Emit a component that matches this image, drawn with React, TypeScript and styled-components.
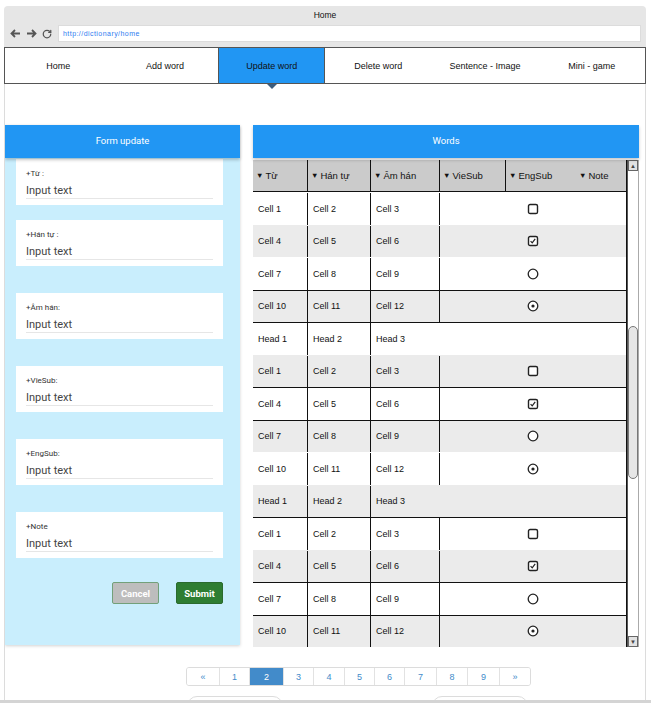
import React from 'react';
import styled, { createGlobalStyle } from 'styled-components';
import { RotateCw } from 'lucide-react';

const GlobalStyle = createGlobalStyle`
  html, body { margin: 0; padding: 0; background: #fff; }
  body { overflow: hidden; font-family: 'Liberation Sans', Arial, sans-serif; }
  * { box-sizing: border-box; }
`;

const NAV = ['Home', 'Add word', 'Update word', 'Delete word', 'Sentence - Image', 'Mini - game'];

const FIELDS = [
  { label: '+Từ :', gap: 1 },
  { label: '+Hán tự :', gap: 15 },
  { label: '+Âm hán:', gap: 27 },
  { label: '+VieSub:', gap: 27 },
  { label: '+EngSub:', gap: 27 },
  { label: '+Note', gap: 27 },
];

type Ctrl = 'box' | 'checked' | 'radio' | 'dot';
type RowData = { cells: string[]; ctrl?: Ctrl; head?: boolean };

const group: RowData[] = [
  { cells: ['Cell 1', 'Cell 2', 'Cell 3'], ctrl: 'box' },
  { cells: ['Cell 4', 'Cell 5', 'Cell 6'], ctrl: 'checked' },
  { cells: ['Cell 7', 'Cell 8', 'Cell 9'], ctrl: 'radio' },
  { cells: ['Cell 10', 'Cell 11', 'Cell 12'], ctrl: 'dot' },
];
const headRow: RowData = { cells: ['Head 1', 'Head 2', 'Head 3'], head: true };
const ROWS = [...group, headRow, ...group, headRow, ...group];
// separator lines as they appear in the mockup
const LINES = [false, false, false, true, true, false, true, true, false, false, true, false, true, true];

const PAGES = ['«', '1', '2', '3', '4', '5', '6', '7', '8', '9', '»'];

const Page = styled.div`
  width: 651px;
  height: 703px;
  display: flex;
  flex-direction: column;
  overflow: hidden;
`;

const Window = styled.div`
  margin: 6px 0 0 4px;
  width: 642px;
  flex: 1;
  min-height: 0;
  display: flex;
  flex-direction: column;
`;

const TitleBar = styled.div`
  background: #e6e6e6;
  border-radius: 4px 4px 0 0;
  height: 41px;
  display: flex;
  flex-direction: column;
`;

const Title = styled.div`
  height: 19px;
  line-height: 19px;
  text-align: center;
  font-size: 8.5px;
  color: #111;
`;

const AddressRow = styled.div`
  height: 17px;
  display: flex;
  align-items: center;
  padding-left: 6px;
  gap: 5px;
  color: #555;
`;

const AddressBox = styled.div`
  margin-left: auto;
  margin-right: 5px;
  width: 583px;
  height: 17px;
  background: #fff;
  border: 1px solid #dcdcdc;
  padding-left: 4px;
  font-size: 7px;
  letter-spacing: 0.45px;
  line-height: 15px;
  color: #2f7cf0;
`;

const NavBar = styled.div`
  height: 37px;
  border: 1px solid #555;
  display: flex;
`;

const NavItem = styled.div<{ $active?: boolean }>`
  position: relative;
  flex: 1;
  display: flex;
  align-items: center;
  justify-content: center;
  font-size: 9px;
  color: #111;
  background: ${(p) => (p.$active ? '#2196f3' : 'transparent')};
  border-left: 1px solid ${(p) => (p.$active ? '#555' : 'transparent')};
  border-right: 1px solid ${(p) => (p.$active ? '#555' : 'transparent')};
`;

const Pointer = styled.div`
  position: absolute;
  left: 50%;
  bottom: -6px;
  margin-left: -5px;
  width: 0;
  height: 0;
  border-left: 5px solid transparent;
  border-right: 5px solid transparent;
  border-top: 5px solid #3d5d7d;
`;

const Content = styled.div`
  flex: 1;
  min-height: 0;
  overflow: hidden;
  border-left: 1px solid #dcdcdc;
  border-right: 1px solid #dcdcdc;
  padding-top: 41px;
`;

const Columns = styled.div`
  display: flex;
  align-items: flex-start;
  gap: 13px;
`;

const FormPanel = styled.div`
  width: 235px;
  height: 520px;
  display: flex;
  flex-direction: column;
  background: #c9eefd;
  box-shadow: 0 1px 3px rgba(0, 0, 0, 0.18);
`;

const PanelHeader = styled.div`
  position: relative;
  z-index: 1;
  height: 33px;
  flex-shrink: 0;
  background: #2196f3;
  color: #fff;
  display: flex;
  align-items: center;
  justify-content: center;
  padding-bottom: 2px;
  font-family: Roboto, 'Liberation Sans', sans-serif;
  font-size: 9.5px;
  box-shadow: 0 2px 3px rgba(0, 0, 0, 0.22);
`;

const FormBody = styled.div`
  padding: 0 17px 0 11px;
  display: flex;
  flex-direction: column;
`;

const FieldCard = styled.div<{ $gap: number }>`
  margin-top: ${(p) => p.$gap}px;
  height: 46px;
  background: #fff;
  padding: 10px 10px 0;
  font-family: Roboto, 'Liberation Sans', sans-serif;
`;

const FieldLabel = styled.div`
  font-size: 8px;
  line-height: 10px;
  color: #333;
`;

const FieldInput = styled.div`
  margin-top: 5px;
  font-size: 11px;
  line-height: 14px;
  color: #444;
  border-bottom: 1px solid #e6e6e6;
`;

const Actions = styled.div`
  margin-top: 24px;
  display: flex;
  justify-content: flex-end;
  gap: 17px;
`;

const Button = styled.div<{ $primary?: boolean }>`
  width: 47px;
  height: 22px;
  border-radius: 2px;
  display: flex;
  align-items: center;
  justify-content: center;
  font-family: Roboto, 'Liberation Sans', sans-serif;
  font-size: 9.5px;
  font-weight: bold;
  color: #fff;
  background: ${(p) => (p.$primary ? '#2e7d32' : '#bdbdbd')};
  border: 1px solid ${(p) => (p.$primary ? '#2a6a2e' : '#72a07a')};
`;

const WordsPanel = styled.div`
  width: 386px;
  display: flex;
  flex-direction: column;
`;

const TableWrap = styled.div`
  margin-top: 2px;
  height: 487px;
  display: flex;
`;

const Table = styled.div`
  width: 374px;
  border-right: 1px solid #111;
  font-size: 9px;
  color: #111;
`;

const HeaderRow = styled.div`
  height: 32px;
  display: grid;
  grid-template-columns: 55px 63px 69px 66px 70px 1fr;
  background: #cbcbcb;
  border-bottom: 1px solid #111;
`;

const HeaderCell = styled.div<{ $line?: boolean }>`
  display: flex;
  align-items: center;
  padding-left: 3px;
  font-size: 9.5px;
  border-right: 1px solid ${(p) => (p.$line ? '#111' : 'transparent')};
`;

const SortMark = styled.span`
  font-size: 7.5px;
  margin-right: 2px;
`;

const Row = styled.div<{ $alt: boolean; $line: boolean }>`
  height: 32.5px;
  display: grid;
  grid-template-columns: 55px 63px 69px 1fr;
  background: ${(p) => (p.$alt ? '#ebebeb' : '#fff')};
  border-top: 1px solid ${(p) => (p.$line ? '#111' : 'transparent')};
`;

const Cell = styled.div<{ $line?: boolean; $span?: boolean }>`
  display: flex;
  align-items: center;
  padding-left: 5px;
  grid-column: ${(p) => (p.$span ? 'span 2' : 'auto')};
  border-right: 1px solid ${(p) => (p.$line ? '#111' : 'transparent')};
`;

const CtrlCell = styled.div`
  display: flex;
  align-items: center;
  justify-content: center;
`;

const Scrollbar = styled.div`
  width: 12px;
  display: flex;
  flex-direction: column;
  border-left: 1px solid #555;
  border-right: 1px solid #aaa;
  background: #fff;
`;

const ScrollBtn = styled.div`
  height: 11px;
  flex-shrink: 0;
  background: #e2e2e2;
  border: 1px solid #666;
  display: flex;
  align-items: center;
  justify-content: center;
  font-size: 6px;
  color: #444;
`;

const Track = styled.div`
  flex: 1;
`;

const Thumb = styled.div`
  margin-top: 155px;
  height: 153px;
  background: #e6e6e6;
  border: 1px solid #777;
  border-radius: 6px;
`;

const Pagination = styled.div`
  margin: 20px 0 0 181px;
  width: 345px;
  height: 19px;
  display: grid;
  grid-template-columns: 33px 30px 34px 30px 31px 30px 30px 32px 31px 32px 1fr;
  border: 1px solid #dcdcdc;
  border-radius: 3px;
  overflow: hidden;
`;

const PageItem = styled.div<{ $active?: boolean }>`
  display: flex;
  align-items: center;
  justify-content: center;
  font-size: 9px;
  color: ${(p) => (p.$active ? '#fff' : '#428bca')};
  background: ${(p) => (p.$active ? '#428bca' : '#fff')};
  border-right: 1px solid #e2e2e2;
  &:last-child {
    border-right: none;
  }
`;

const LowerRow = styled.div`
  margin: 10px 0 0 182px;
  display: flex;
  gap: 149px;
`;

const LowerBox = styled.div`
  width: 96px;
  height: 24px;
  border: 1px solid #dcdcdc;
  border-radius: 10px;
`;

const BottomStrip = styled.div`
  height: 3px;
  flex-shrink: 0;
  background: #d4d4d4;
`;

const Arrow = ({ dir }: { dir: 'left' | 'right' }) => (
  <svg width="11" height="9" viewBox="0 0 11 9">
    {dir === 'left' ? (
      <path d="M10 4.5H1.5 M5 1 L1.5 4.5 L5 8" fill="none" stroke="#555" strokeWidth="1.8" />
    ) : (
      <path d="M1 4.5H9.5 M6 1 L9.5 4.5 L6 8" fill="none" stroke="#555" strokeWidth="1.8" />
    )}
  </svg>
);

const Control = ({ kind }: { kind: Ctrl }) => (
  <svg width="12" height="12" viewBox="0 0 12 12">
    {kind === 'box' || kind === 'checked' ? (
      <rect x="1.5" y="1.5" width="9" height="9" rx="1.6" fill="#fff" stroke="#222" strokeWidth="1.4" />
    ) : (
      <circle cx="6" cy="6" r="4.8" fill="#fff" stroke="#222" strokeWidth="1.3" />
    )}
    {kind === 'checked' && <path d="M3.6 6.2 L5.2 7.8 L8.2 3.8" fill="none" stroke="#222" strokeWidth="1.2" />}
    {kind === 'dot' && <circle cx="6" cy="6" r="1.6" fill="#222" />}
  </svg>
);

const HEAD_COLS = ['Từ', 'Hán tự', 'Âm hán', 'VieSub', 'EngSub', 'Note'];

const App = () => {
  return (
    <Page>
      <GlobalStyle />
      <Window>
        <TitleBar>
          <Title>Home</Title>
          <AddressRow>
            <Arrow dir="left" />
            <Arrow dir="right" />
            <RotateCw size={10} strokeWidth={3} />
            <AddressBox>http://dictionary/home</AddressBox>
          </AddressRow>
        </TitleBar>
        <NavBar>
          {NAV.map((item) => (
            <NavItem key={item} $active={item === 'Update word'}>
              {item}
              {item === 'Update word' && <Pointer />}
            </NavItem>
          ))}
        </NavBar>
        <Content>
          <Columns>
            <FormPanel>
              <PanelHeader>Form update</PanelHeader>
              <FormBody>
                {FIELDS.map((f) => (
                  <FieldCard key={f.label} $gap={f.gap}>
                    <FieldLabel>{f.label}</FieldLabel>
                    <FieldInput>Input text</FieldInput>
                  </FieldCard>
                ))}
                <Actions>
                  <Button>Cancel</Button>
                  <Button $primary>Submit</Button>
                </Actions>
              </FormBody>
            </FormPanel>
            <WordsPanel>
              <PanelHeader>Words</PanelHeader>
              <TableWrap>
                <Table>
                  <HeaderRow>
                    {HEAD_COLS.map((h, i) => (
                      <HeaderCell key={h} $line={i < 4}>
                        <SortMark>▼</SortMark>
                        {h}
                      </HeaderCell>
                    ))}
                  </HeaderRow>
                  {ROWS.map((r, i) => (
                    <Row key={i} $alt={i % 2 === 1} $line={LINES[i]}>
                      <Cell $line>{r.cells[0]}</Cell>
                      <Cell $line>{r.cells[1]}</Cell>
                      {r.head ? (
                        <Cell $span>{r.cells[2]}</Cell>
                      ) : (
                        <>
                          <Cell $line>{r.cells[2]}</Cell>
                          <CtrlCell>{r.ctrl && <Control kind={r.ctrl} />}</CtrlCell>
                        </>
                      )}
                    </Row>
                  ))}
                </Table>
                <Scrollbar>
                  <ScrollBtn>▲</ScrollBtn>
                  <Track>
                    <Thumb />
                  </Track>
                  <ScrollBtn>▼</ScrollBtn>
                </Scrollbar>
              </TableWrap>
            </WordsPanel>
          </Columns>
          <Pagination>
            {PAGES.map((p) => (
              <PageItem key={p} $active={p === '2'}>
                {p}
              </PageItem>
            ))}
          </Pagination>
          <LowerRow>
            <LowerBox />
            <LowerBox />
          </LowerRow>
        </Content>
      </Window>
      <BottomStrip />
    </Page>
  );
};

export default App;
